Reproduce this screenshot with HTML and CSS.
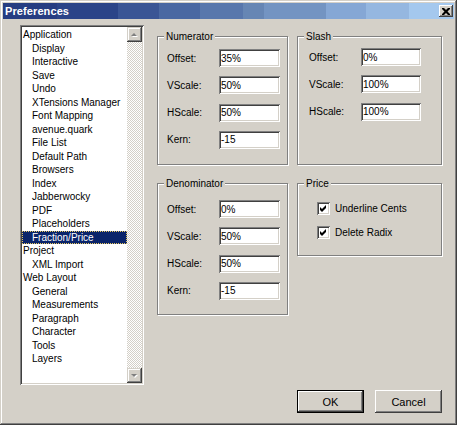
FILE: index.html
```html
<!DOCTYPE html>
<html lang="en">
  <head>
    <meta charset="UTF-8" />
    <title>Preferences</title>
    <link rel="stylesheet" href="styles.css">
  </head>
  <body>
    <div class="window">
      <div class="titlebar">
        <span class="title">Preferences</span>
        <button class="close-btn" aria-label="Close">
          <svg width="8" height="7" viewBox="0 0 8 7">
            <path d="M0 0h2l2 2 2-2h2v1l-2.5 2.5 2.5 2.5v1h-2l-2-2-2 2h-2v-1l2.5-2.5-2.5-2.5z" fill="#000"/>
          </svg>
        </button>
      </div>

      <div class="content">
        <div class="main">
          <div class="listbox">
            <ul class="list">
              <li>Application</li>
              <li class="child">Display</li>
              <li class="child">Interactive</li>
              <li class="child">Save</li>
              <li class="child">Undo</li>
              <li class="child">XTensions Manager</li>
              <li class="child">Font Mapping</li>
              <li class="child">avenue.quark</li>
              <li class="child">File List</li>
              <li class="child">Default Path</li>
              <li class="child">Browsers</li>
              <li class="child">Index</li>
              <li class="child">Jabberwocky</li>
              <li class="child">PDF</li>
              <li class="child">Placeholders</li>
              <li class="child selected">Fraction/Price</li>
              <li>Project</li>
              <li class="child">XML Import</li>
              <li>Web Layout</li>
              <li class="child">General</li>
              <li class="child">Measurements</li>
              <li class="child">Paragraph</li>
              <li class="child">Character</li>
              <li class="child">Tools</li>
              <li class="child">Layers</li>
            </ul>
            <div class="scrollbar">
              <div class="scroll-btn">
                <svg width="7" height="5" viewBox="0 0 7 5">
                  <path d="M4 2l3 3h-6z" fill="#fff"/>
                  <path d="M3 1l3 3h-6z" fill="#808080"/>
                </svg>
              </div>
              <div class="scroll-track"></div>
              <div class="scroll-btn">
                <svg width="7" height="5" viewBox="0 0 7 5">
                  <path d="M1 2h6l-3 3z" fill="#fff"/>
                  <path d="M0 1h6l-3 3z" fill="#808080"/>
                </svg>
              </div>
            </div>
          </div>

          <div class="panels">
            <div class="group numerator">
              <span class="group-title">Numerator</span>
              <div class="fields">
                <label>Offset:</label><input class="field" value="35%">
                <label>VScale:</label><input class="field" value="50%">
                <label>HScale:</label><input class="field" value="50%">
                <label>Kern:</label><input class="field" value="-15">
              </div>
            </div>

            <div class="group slash">
              <span class="group-title">Slash</span>
              <div class="fields">
                <label>Offset:</label><input class="field" value="0%">
                <label>VScale:</label><input class="field" value="100%">
                <label>HScale:</label><input class="field" value="100%">
              </div>
            </div>

            <div class="group denominator">
              <span class="group-title">Denominator</span>
              <div class="fields">
                <label>Offset:</label><input class="field" value="0%">
                <label>VScale:</label><input class="field" value="50%">
                <label>HScale:</label><input class="field" value="50%">
                <label>Kern:</label><input class="field" value="-15">
              </div>
            </div>

            <div class="group price">
              <span class="group-title">Price</span>
              <div class="checks">
                <div class="check-row">
                  <span class="checkbox">
                    <svg width="9" height="9" viewBox="0 0 9 9"><path d="M1 3l2 2 4-4v3l-4 4-2-2z" fill="#000"/></svg>
                  </span>
                  <span>Underline Cents</span>
                </div>
                <div class="check-row">
                  <span class="checkbox">
                    <svg width="9" height="9" viewBox="0 0 9 9"><path d="M1 3l2 2 4-4v3l-4 4-2-2z" fill="#000"/></svg>
                  </span>
                  <span>Delete Radix</span>
                </div>
              </div>
            </div>
          </div>
        </div>

        <div class="buttons">
          <button class="btn default">OK</button>
          <button class="btn">Cancel</button>
        </div>
      </div>
    </div>
  </body>
</html>
```

FILE: styles.css
```css
body {
  margin: 0;
  font-family: "Liberation Sans", Arial, sans-serif;
  font-size: 10px;
  color: #000;
  background-color: #d4d0c8;
}
.window {
  width: 457px;
  height: 425px;
  box-sizing: border-box;
  padding: 3px;
  background-color: #d4d0c8;
  box-shadow: inset -1px -1px #404040, inset 1px 1px #d4d0c8,
    inset -2px -2px #808080, inset 2px 2px #fff;
}
.titlebar {
  height: 16px;
  display: flex;
  align-items: center;
  justify-content: space-between;
  padding: 0 1px 0 2px;
  background: linear-gradient(
    to right,
    #263d82 0 12%,
    #2b4488 12% 25.5%,
    #3a5595 25.5% 34.7%,
    #4a68a2 34.7% 43.7%,
    #5877ac 43.7% 53.3%,
    #6686b4 53.3% 57.8%,
    #7394c2 57.8% 71.7%,
    #85a7d5 71.7% 80.5%,
    #95b7e0 80.5% 90%,
    #a4c8ee 90% 100%
  );
}
.title {
  color: #fff;
  font-weight: bold;
  font-size: 11px;
  letter-spacing: 0.1px;
}
.close-btn {
  width: 14px;
  height: 12px;
  padding: 0;
  border: none;
  display: flex;
  align-items: center;
  justify-content: center;
  background-color: #d4d0c8;
  box-shadow: inset -1px -1px #404040, inset 1px 1px #fff,
    inset -2px -2px #808080, inset 2px 2px #d4d0c8;
}
.content {
  padding: 6px 12px 0 17px;
}
.main {
  display: flex;
  align-items: flex-start;
  gap: 13px;
}
.listbox {
  width: 124px;
  height: 360px;
  box-sizing: border-box;
  padding: 2px;
  display: flex;
  background-color: #fff;
  box-shadow: inset 1px 1px #808080, inset -1px -1px #fff,
    inset 2px 2px #404040, inset -2px -2px #d4d0c8;
}
.list {
  flex: 1;
  list-style: none;
  margin: 0;
  padding: 1px 0 0 0;
}
.list li {
  height: 13.5px;
  line-height: 13.5px;
  padding-left: 1px;
  white-space: nowrap;
}
.list li.child {
  padding-left: 10px;
}
.list li.selected {
  background-color: #0a246a;
  color: #fff;
  outline: 1px dotted #e8c860;
  outline-offset: -1px;
}
.scrollbar {
  width: 15px;
  display: flex;
  flex-direction: column;
}
.scroll-btn {
  height: 15px;
  display: flex;
  align-items: center;
  justify-content: center;
  background-color: #d4d0c8;
  box-shadow: inset -1px -1px #404040, inset 1px 1px #d4d0c8,
    inset -2px -2px #808080, inset 2px 2px #fff;
}
.scroll-track {
  flex: 1;
  background: repeating-conic-gradient(#d4d0c8 0 25%, #fff 0 50%) 0 0 / 2px 2px;
}
.panels {
  margin-top: 11px;
  display: grid;
  grid-template-columns: 131px 145px;
  column-gap: 9px;
  row-gap: 18px;
  align-items: start;
}
.group {
  position: relative;
  border: 1px solid #808080;
  box-shadow: inset 1px 1px #fff, 1px 1px #fff;
}
.group-title {
  position: absolute;
  top: -7px;
  left: 6px;
  padding: 0 2px;
  line-height: 13px;
  background-color: #d4d0c8;
}
.fields {
  display: grid;
  align-items: center;
  row-gap: 9.3px;
}
.numerator {
  height: 127px;
}
.numerator .fields {
  grid-template-columns: 52px 61px;
  padding: 12px 0 0 9px;
}
.slash {
  height: 127px;
}
.slash .fields {
  grid-template-columns: 52px 60px;
  padding: 11px 0 0 11px;
}
.denominator {
  height: 130px;
}
.denominator .fields {
  grid-template-columns: 52px 61px;
  padding: 16px 0 0 9px;
}
.price {
  height: 71px;
}
.field {
  height: 18px;
  width: 100%;
  box-sizing: border-box;
  margin: 0;
  padding: 0 0 0 2px;
  border: none;
  font-family: inherit;
  font-size: 10px;
  background-color: #fff;
  box-shadow: inset 1px 1px #808080, inset -1px -1px #fff,
    inset 2px 2px #404040, inset -2px -2px #d4d0c8;
}
.checks {
  display: flex;
  flex-direction: column;
  gap: 11px;
  padding: 18px 0 0 19px;
}
.check-row {
  display: flex;
  align-items: center;
  gap: 5px;
  line-height: 13px;
}
.checkbox {
  width: 13px;
  height: 13px;
  box-sizing: border-box;
  display: flex;
  align-items: center;
  justify-content: center;
  background-color: #fff;
  box-shadow: inset 1px 1px #808080, inset -1px -1px #fff,
    inset 2px 2px #404040, inset -2px -2px #d4d0c8;
}
.buttons {
  display: flex;
  justify-content: flex-end;
  gap: 11px;
  margin-top: 5px;
}
.btn {
  width: 67px;
  height: 23px;
  padding: 0;
  border: none;
  font-family: inherit;
  font-size: 11px;
  color: #000;
  background-color: #d4d0c8;
  box-shadow: inset -1px -1px #404040, inset 1px 1px #fff,
    inset -2px -2px #808080, inset 2px 2px #d4d0c8;
}
.btn.default {
  box-shadow: inset 0 0 0 1px #000, inset -2px -2px #404040,
    inset 2px 2px #fff, inset -3px -3px #808080;
}
```
